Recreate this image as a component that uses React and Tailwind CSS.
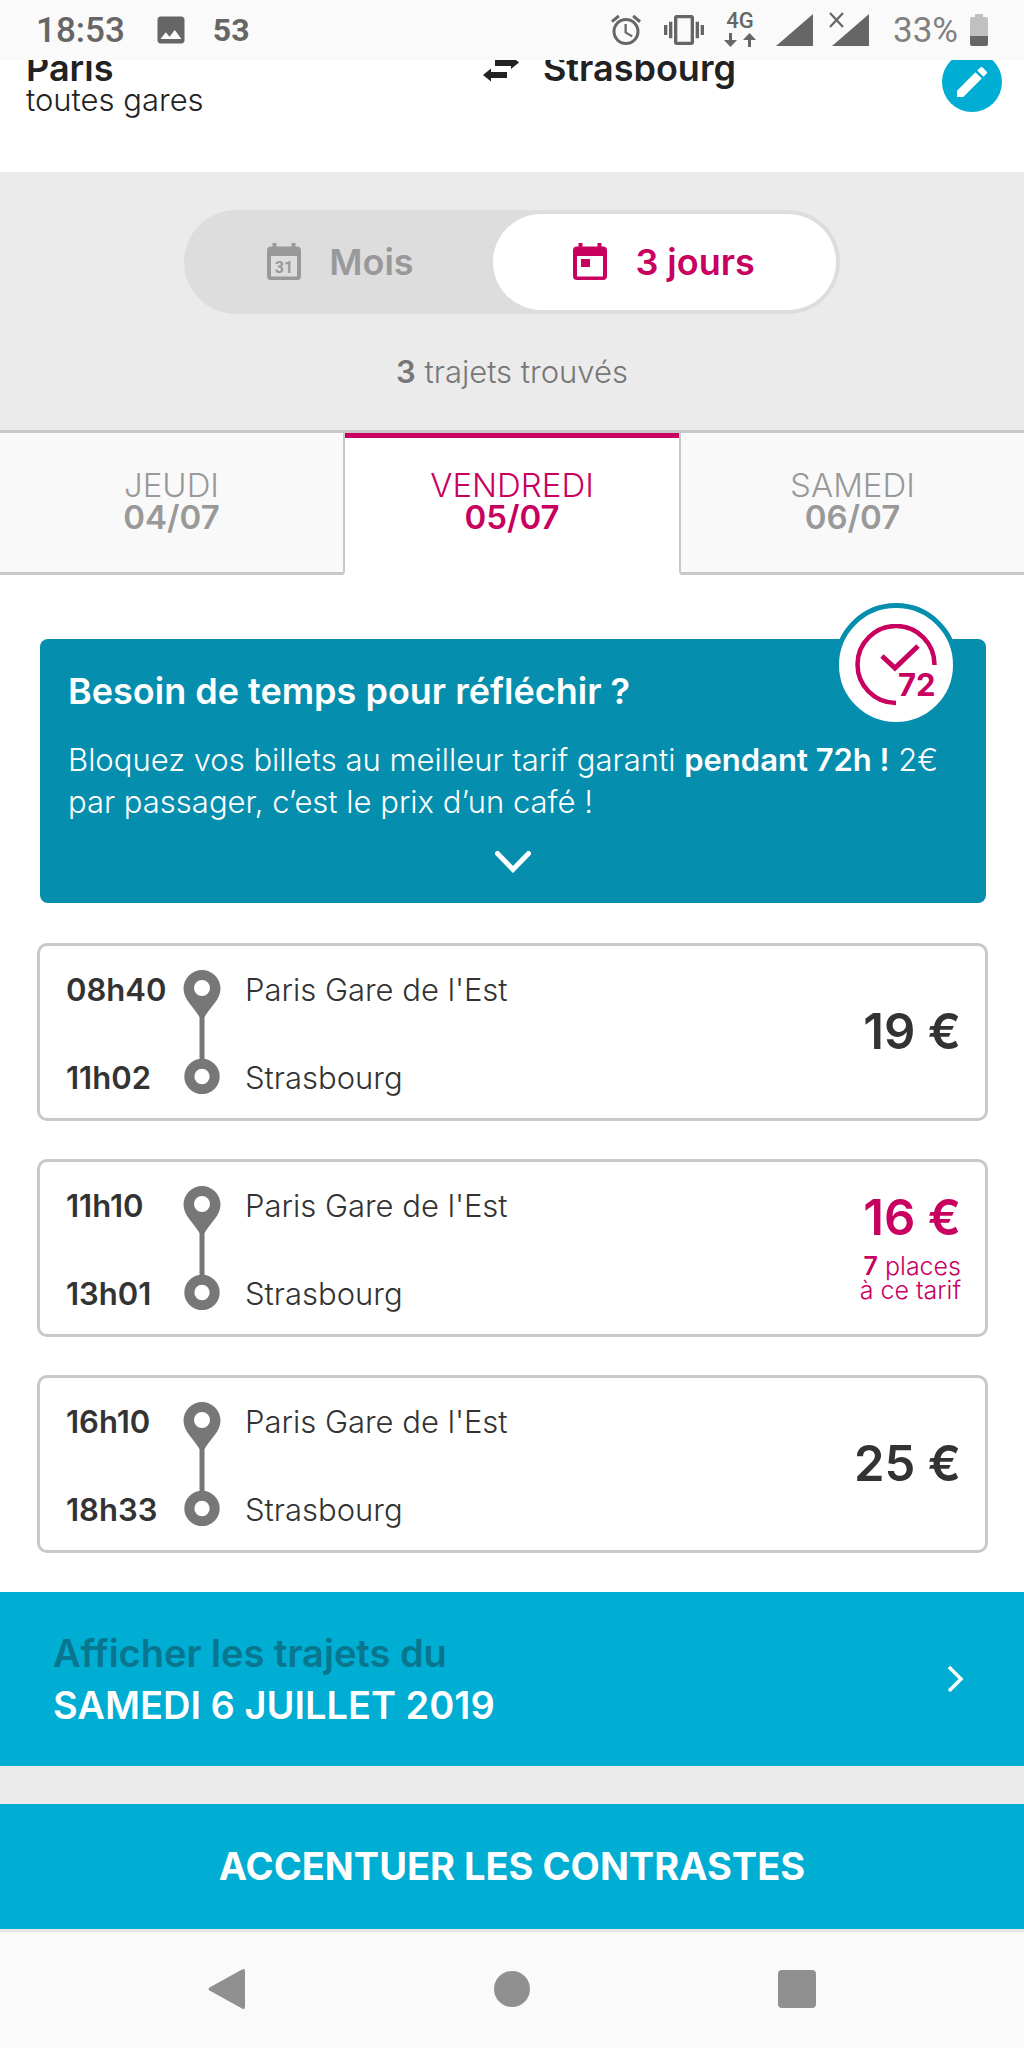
import { useState } from "react";
import { MdAlarm, MdEdit, MdImage, MdVibration } from "react-icons/md";

const DAYS = [
  { key: "jeu", name: "JEUDI", date: "04/07" },
  { key: "ven", name: "VENDREDI", date: "05/07" },
  { key: "sam", name: "SAMEDI", date: "06/07" },
];

const TRIPS = [
  { departure: "08h40", arrival: "11h02", price: "19 €" },
  { departure: "11h10", arrival: "13h01", price: "16 €", seats: 7 },
  { departure: "16h10", arrival: "18h33", price: "25 €" },
];

function StatusBar() {
  return (
    <div className="relative z-10 flex h-15 items-center justify-between bg-[#fafafa] pr-9 pl-9 font-[Roboto,sans-serif] text-[35px] leading-none text-[#666]">
      <div className="flex items-center">
        <span className="font-medium">18:53</span>
        <MdImage className="ml-7 size-9" />
        <span className="ml-6 text-[32px] font-bold">53</span>
      </div>
      <div className="flex items-center">
        <MdAlarm className="size-9" />
        <MdVibration className="ml-5 size-10" />
        <div className="ml-5 flex w-8 flex-col items-center">
          <span className="text-[22px] leading-4 font-medium">4G</span>
          <svg viewBox="0 0 32 14" className="mt-1 h-[14px] w-8" fill="currentColor">
            <path d="M5 0h3v7h5l-6.500 7L0 7h5zM24 14h3V7h5l-6.500-7L19 7h5z" />
          </svg>
        </div>
        <svg viewBox="0 0 37 32" className="ml-5 h-8 w-[37px]" fill="currentColor">
          <path d="M37 0v32H0z" />
        </svg>
        <svg viewBox="0 0 40 34" className="mb-[2px] ml-4 h-[34px] w-10" fill="currentColor">
          <path d="M40 2v32H3z" />
          <path d="M1 1l13 14M14 1L1 15" fill="none" stroke="currentColor" strokeWidth="2.200" />
        </svg>
        <span className="ml-6 text-[#808080]">33%</span>
        <svg viewBox="0 0 18 32" className="ml-3 h-8 w-[18px]">
          <path d="M5 0h8v3h3q2 0 2 2v17H0V5q0-2 2-2h3z" fill="#c0c0c0" />
          <path d="M0 22h18v8q0 2-2 2H2q-2 0-2-2z" fill="#666" />
        </svg>
      </div>
    </div>
  );
}

// Scrolled a little under the status bar
function Journey() {
  return (
    <header className="h-28 overflow-hidden bg-white text-[#222]">
      <div className="-mt-2 flex items-start pr-[22px]">
        <div className="w-[47%] pl-[26px]">
          <div className="text-[36px] leading-8 font-semibold">Paris</div>
          <div className="text-[31px] leading-8 font-light">toutes gares</div>
        </div>
        <svg viewBox="0 0 36 26" className="mt-1 ml-3 h-[26px] w-9 shrink-0" fill="currentColor">
          <path d="M36 6.500L28 0v4H12v6h16v3zM0 19l8-6.500v3.500h16v6H8v3.500z" />
        </svg>
        <div className="ml-6 flex-1 text-[36px] leading-8 font-semibold">Strasbourg</div>
        <button aria-label="Modifier le trajet" className="flex size-15 items-center justify-center rounded-full bg-[#00add3] text-white">
          <MdEdit className="size-10" />
        </button>
      </div>
    </header>
  );
}

function CalendarIcon({ month }) {
  return (
    <svg viewBox="0 0 34 37" className="h-[37px] w-[34px] shrink-0" fill="currentColor">
      <path fillRule="evenodd" d="M5.500 0h4v3.500h15V0h4v3.500h1.500q4 0 4 4V33q0 4-4 4H4q-4 0-4-4V7.500q0-4 4-4h1.500zM4 13v20.500h26V13z" />
      {month ? (
        <text x="17" y="29.500" textAnchor="middle" fontSize="16" fontWeight="700" fontFamily="Roboto, sans-serif">31</text>
      ) : (
        <path d="M8 16h9v8H8z" />
      )}
    </svg>
  );
}

function ViewToggle() {
  const [view, setView] = useState("days");
  const base = "flex items-center justify-center gap-7 rounded-full pb-px text-[36px] font-semibold";
  const on = "bg-white text-[#c8005f]";
  const off = "text-[#999]";
  return (
    <div className="mx-auto flex h-26 w-[64%] rounded-full bg-[#ddd] p-1">
      <button onClick={() => setView("month")} className={`${base} w-[47%] ${view === "month" ? on : off}`}>
        <CalendarIcon month />
        Mois
      </button>
      <button onClick={() => setView("days")} className={`${base} w-[53%] ${view === "days" ? on : off}`}>
        <CalendarIcon />
        3 jours
      </button>
    </div>
  );
}

function DayTabs() {
  const [day, setDay] = useState("ven");
  return (
    <nav className="flex border-t-3 border-[#c9c9c9]">
      {DAYS.map(({ key, name, date }) => (
        <button
          key={key}
          onClick={() => setDay(key)}
          className={`h-[142px] border-b-3 pb-1 text-[33px] leading-8 ${
            day === key
              ? "w-[33%] border-x-2 border-x-[#c9c9c9] border-b-white bg-white text-[#c8005f] shadow-[inset_0_5px_0_#c8005f]"
              : "flex-1 border-[#c9c9c9] bg-[#f9f9f9] text-[#999]"
          }`}
        >
          <span className="block font-light">{name}</span>
          <span className="block font-semibold">{date}</span>
        </button>
      ))}
    </nav>
  );
}

function Promo() {
  return (
    <section className="relative mr-[38px] ml-10 rounded-lg bg-[#058ead] px-7 pt-8 pb-[30px] text-white">
      <h2 className="text-[36px] leading-10 font-semibold">Besoin de temps pour réfléchir ?</h2>
      <p className="mt-7 text-[31px] leading-[42px] font-light">
        Bloquez vos billets au meilleur tarif garanti <b className="font-semibold">pendant 72h !</b> 2€
        par passager, c’est le prix d’un café !
      </p>
      <button aria-label="En savoir plus" className="mx-auto mt-7 block">
        <svg viewBox="0 0 36 22" className="h-[22px] w-9" fill="none" stroke="currentColor" strokeWidth="5">
          <path d="M2.500 2.500L18 18.500l15.500-16" strokeLinecap="round" />
        </svg>
      </button>
      <div className="absolute -top-9 right-7 flex size-31 items-center justify-center rounded-full border-5 border-[#058ead] bg-white">
        <svg viewBox="0 0 82 82" className="size-[82px]" fill="none" stroke="#c8005f" strokeWidth="4.500">
          <path d="M41 79A38.500 38.500 0 1 1 79.500 41" />
          <path d="M27 32l13 12 23-22" strokeWidth="5" />
          <text x="43" y="72" fill="#c8005f" stroke="none" fontSize="31" fontWeight="700">72</text>
        </svg>
      </div>
    </section>
  );
}

function TripCard({ trip }) {
  const { departure, arrival, price, seats } = trip;
  return (
    <li>
      <button className="flex h-[178px] w-full items-center rounded-[10px] border-3 border-[#c9c9c9] bg-white pr-6 pl-[26px] text-left text-[31px] leading-8 text-[#333]">
        <span className="flex h-[124px] w-[117px] flex-col justify-between pt-1 font-semibold">
          <span>{departure}</span>
          <span>{arrival}</span>
        </span>
        <svg viewBox="0 0 38 124" className="h-[124px] w-[38px] shrink-0" fill="#777">
          <path d="M16.500 44h5v50h-5z" />
          <path fillRule="evenodd" d="M19 0A18.500 18.500 0 0 1 37.500 18.500C37.500 30 27 37 21.500 47h-5C11 37 .5 30 .5 18.500A18.500 18.500 0 0 1 19 0zm0 10a8 8 0 1 0 0 16 8 8 0 0 0 0-16z" />
          <circle cx="19" cy="106.500" r="12.700" fill="none" stroke="#777" strokeWidth="10" />
        </svg>
        <span className="ml-6 flex h-[124px] flex-1 flex-col justify-between pt-1 font-light">
          <span>Paris Gare de l'Est</span>
          <span>Strasbourg</span>
        </span>
        <span className={`text-right ${seats ? "text-[#c8005f]" : ""}`}>
          <span className="block text-[49px] leading-12 font-semibold">{price}</span>
          {seats && (
            <span className="mt-3 block text-[25px] leading-6 font-light">
              <b className="font-semibold">{seats}</b> places
              <br />à ce tarif
            </span>
          )}
        </span>
      </button>
    </li>
  );
}

function NavBar() {
  return (
    <nav className="flex h-30 items-center justify-around border-t-3 border-[#e6e6e6] bg-[#fafafa] px-[84px] pb-1 text-[#909090]">
      <button aria-label="Retour">
        <svg viewBox="0 0 38 42" className="h-[42px] w-[38px]" fill="currentColor">
          <path d="M1.500 19.500L34 1.500q3-1.500 3 1.500v36q0 3-3 1.500L1.500 22.500q-2-1.500 0-3z" />
        </svg>
      </button>
      <button aria-label="Accueil" className="size-9 rounded-full bg-[#909090]" />
      <button aria-label="Applications récentes" className="size-[38px] rounded bg-[#909090]" />
    </nav>
  );
}

export default function App() {
  return (
    <div className="bg-white font-[Inter,sans-serif]">
      <StatusBar />
      <Journey />
      <div className="bg-[#ebebeb] pt-[38px] pb-10">
        <ViewToggle />
        <p className="mt-10 text-center text-[31px] leading-9 font-light text-[#777]">
          <b className="font-semibold">3</b> trajets trouvés
        </p>
      </div>
      <DayTabs />
      <main className="pt-16 pb-[39px]">
        <Promo />
        <ul className="mt-10 flex flex-col gap-[38px] pr-9 pl-[37px]">
          {TRIPS.map((trip) => (
            <TripCard key={trip.departure} trip={trip} />
          ))}
        </ul>
      </main>
      <a href="#samedi" className="flex h-[174px] items-center justify-between bg-[#00add3] pr-15 pl-[53px] text-[38px] leading-13 font-semibold text-white">
        <span>
          <span className="block text-[#08768f]">Afficher les trajets du</span>
          <span className="block">SAMEDI 6 JUILLET 2019</span>
        </span>
        <svg viewBox="0 0 18 26" className="h-[26px] w-[18px]" fill="none" stroke="currentColor" strokeWidth="3.500">
          <path d="M3 1l12 12L3 25" />
        </svg>
      </a>
      <div className="bg-[#ebebeb] pt-[38px]">
        <button className="h-[125px] w-full bg-[#00add3] text-[38px] font-bold text-white">
          ACCENTUER LES CONTRASTES
        </button>
      </div>
      <NavBar />
    </div>
  );
}
